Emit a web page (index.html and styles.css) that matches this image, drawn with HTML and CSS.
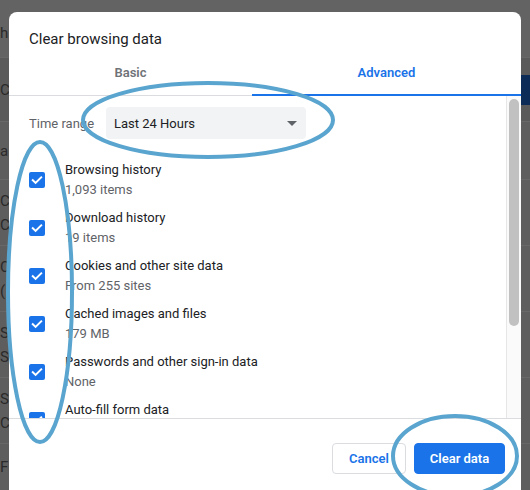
FILE: index.html
```html
<!DOCTYPE html>
<html>
<head>
<meta charset="utf-8">
<link rel="stylesheet" href="styles.css">
</head>
<body>
<div class="bg-page">
  <div class="bg-row r1"><span>h</span></div>
  <div class="bg-row r2"><span>C</span></div>
  <div class="bg-row r3"><span>a</span></div>
  <div class="bg-row r4"><span>C</span><span>C</span></div>
  <div class="bg-row r4"><span>C</span><span>(</span></div>
  <div class="bg-row r4"><span>S</span><span>S</span></div>
  <div class="bg-row r4"><span>S</span><span>C</span></div>
  <div class="bg-row r5"><span>F</span></div>
  <div class="bg-blue"></div>
</div>

<div class="dialog">
  <div class="title">Clear browsing data</div>
  <div class="tabs">
    <div class="tab">Basic</div>
    <div class="tab active">Advanced</div>
  </div>
  <div class="body">
    <div class="scroll-content">
      <div class="time-row">
        <span class="time-label">Time range</span>
        <div class="select">
          <span>Last 24 Hours</span>
          <span class="arrow"></span>
        </div>
      </div>
      <div class="item">
        <span class="cb"><svg viewBox="0 0 16 16"><path d="M3.8 8.2 L6.6 10.9 L12.2 5.3" /></svg></span>
        <div class="item-text"><div class="item-title">Browsing history</div><div class="item-sub">1,093 items</div></div>
      </div>
      <div class="item">
        <span class="cb"><svg viewBox="0 0 16 16"><path d="M3.8 8.2 L6.6 10.9 L12.2 5.3" /></svg></span>
        <div class="item-text"><div class="item-title">Download history</div><div class="item-sub">19 items</div></div>
      </div>
      <div class="item">
        <span class="cb"><svg viewBox="0 0 16 16"><path d="M3.8 8.2 L6.6 10.9 L12.2 5.3" /></svg></span>
        <div class="item-text"><div class="item-title">Cookies and other site data</div><div class="item-sub">From 255 sites</div></div>
      </div>
      <div class="item">
        <span class="cb"><svg viewBox="0 0 16 16"><path d="M3.8 8.2 L6.6 10.9 L12.2 5.3" /></svg></span>
        <div class="item-text"><div class="item-title">Cached images and files</div><div class="item-sub">179 MB</div></div>
      </div>
      <div class="item">
        <span class="cb"><svg viewBox="0 0 16 16"><path d="M3.8 8.2 L6.6 10.9 L12.2 5.3" /></svg></span>
        <div class="item-text"><div class="item-title">Passwords and other sign-in data</div><div class="item-sub">None</div></div>
      </div>
      <div class="item">
        <span class="cb"><svg viewBox="0 0 16 16"><path d="M3.8 8.2 L6.6 10.9 L12.2 5.3" /></svg></span>
        <div class="item-text"><div class="item-title">Auto-fill form data</div><div class="item-sub">&nbsp;</div></div>
      </div>
    </div>
    <div class="scrollbar"><div class="thumb"></div></div>
  </div>
  <div class="footer">
    <button class="btn cancel">Cancel</button>
    <button class="btn primary">Clear data</button>
  </div>
</div>

<svg class="annotations" viewBox="0 0 530 490" width="530" height="490">
  <ellipse cx="208" cy="120" rx="125" ry="37" />
  <ellipse cx="40" cy="292" rx="32" ry="150" />
  <ellipse cx="455" cy="456" rx="62" ry="40" />
</svg>
</body>
</html>
```
FILE: styles.css
```css
html, body {
  margin: 0;
  padding: 0;
}
body {
  width: 530px;
  height: 490px;
  overflow: hidden;
  position: relative;
  background: #5e5e5e;
  font-family: Roboto, "Liberation Sans", Arial, sans-serif;
}
.bg-page {
  display: flex;
  flex-direction: column;
  width: 530px;
  height: 490px;
  position: relative;
}
.bg-row {
  display: flex;
  flex-direction: column;
  justify-content: center;
  gap: 6px;
  border-bottom: 1px solid #686868;
  font-size: 15px;
  color: #2a2a2a;
  box-sizing: border-box;
}
.r1 { height: 58px; background: #636363; padding-top: 8px; }
.r2 { height: 64px; background: #5a5a5a; }
.r3 { height: 58px; }
.r4 { height: 66px; }
.r5 { height: 46px; border-bottom: none; }
.bg-blue {
  position: absolute;
  right: 0;
  top: 75px;
  width: 12px;
  height: 30px;
  background: #0c2b57;
}

.dialog {
  position: absolute;
  left: 9px;
  top: 12px;
  width: 512px;
  height: 500px;
  background: #ffffff;
  border-radius: 8px;
  display: flex;
  flex-direction: column;
  overflow: hidden;
}
.title {
  padding: 17px 20px 0;
  font-size: 15px;
  line-height: 20px;
  color: #202124;
  height: 23px;
}
.tabs {
  display: grid;
  grid-template-columns: 243px 1fr;
  border-bottom: 1px solid #dadce0;
  box-sizing: border-box;
  height: 44px;
}
.tab {
  display: flex;
  align-items: center;
  justify-content: center;
  font-size: 13px;
  font-weight: 600;
  color: #6f7377;
  padding-bottom: 2px;
}
.tab.active {
  color: #1a73e8;
  border-bottom: 2px solid #1a73e8;
  margin-bottom: -1px;
  padding-bottom: 1px;
}
.body {
  display: flex;
  height: 322px;
  border-bottom: 1px solid #dadce0;
  overflow: hidden;
}
.scroll-content {
  flex: 1;
  padding: 11px 0 0 20px;
  overflow: hidden;
}
.time-row {
  display: flex;
  align-items: center;
  height: 32px;
  margin-bottom: 17px;
}
.time-label {
  font-size: 13px;
  color: #5f6368;
  width: 77px;
}
.select {
  width: 200px;
  height: 32px;
  box-sizing: border-box;
  background: #f1f3f4;
  border-radius: 4px;
  display: flex;
  align-items: center;
  justify-content: space-between;
  padding: 0 8px 0 8px;
  font-size: 13px;
  color: #202124;
}
.arrow {
  width: 0;
  height: 0;
  border-left: 5px solid transparent;
  border-right: 5px solid transparent;
  border-top: 5px solid #5f6368;
  margin-right: 1px;
}
.item {
  display: flex;
  align-items: center;
  height: 48px;
  flex-shrink: 0;
}
.cb {
  width: 16px;
  height: 16px;
  background: #1a73e8;
  border-radius: 2px;
  display: flex;
  margin-right: 20px;
  flex-shrink: 0;
}
.cb svg {
  width: 16px;
  height: 16px;
}
.cb path {
  fill: none;
  stroke: #ffffff;
  stroke-width: 2;
  stroke-linecap: square;
}
.item-text {
  display: flex;
  flex-direction: column;
}
.item-title {
  font-size: 13px;
  line-height: 20px;
  color: #202124;
}
.item-sub {
  font-size: 13px;
  line-height: 20px;
  color: #5f6368;
}
.scrollbar {
  background: #fafafa;
  border-left: 1px solid #e6e6e6;
  padding: 3px 2px 0 2px;
  box-sizing: border-box;
  width: 15px;
}
.thumb {
  width: 10px;
  height: 227px;
  background: #c1c1c1;
  border-radius: 5px;
}
.footer {
  display: flex;
  justify-content: flex-end;
  gap: 8px;
  padding: 24px 16px 0 0;
}
.btn {
  height: 31px;
  border-radius: 4px;
  font-family: Roboto, "Liberation Sans", Arial, sans-serif;
  font-size: 13px;
  font-weight: 600;
  padding: 0;
  cursor: pointer;
}
.cancel {
  width: 74px;
  background: #ffffff;
  border: 1px solid #dadce0;
  color: #1a73e8;
}
.primary {
  width: 91px;
  background: #1a73e8;
  border: 1px solid #1a73e8;
  color: #ffffff;
}
.annotations {
  position: absolute;
  left: 0;
  top: 0;
  pointer-events: none;
}
.annotations ellipse {
  fill: none;
  stroke: #5aa5cf;
  stroke-width: 4;
}
```
